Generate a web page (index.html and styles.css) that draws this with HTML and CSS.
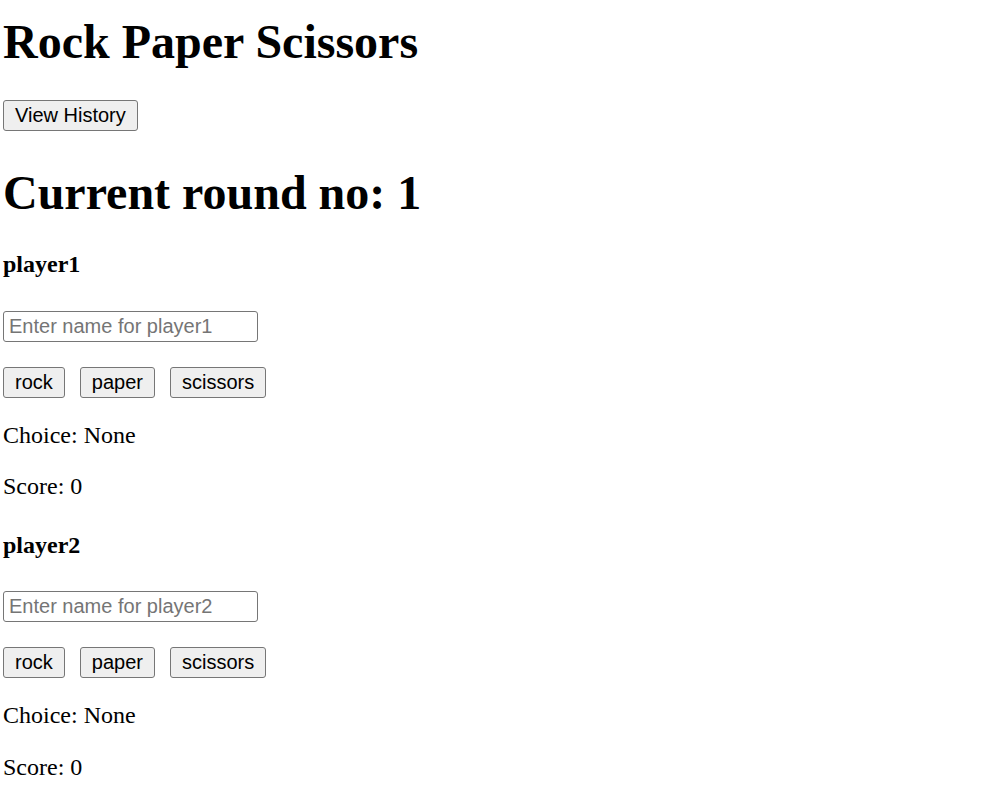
FILE: index.html
```html
<!DOCTYPE html>
<html>
<head>
<meta charset="utf-8">
<title>Rock Paper Scissors</title>
<link rel="stylesheet" href="styles.css">
</head>
<body>
<h1 class="title">Rock Paper Scissors</h1>
<div class="history"><button class="btn">View History</button></div>
<h1 class="round">Current round no: 1</h1>

<section class="player">
  <h4 class="player-name">player1</h4>
  <div class="field"><input class="name-input" type="text" placeholder="Enter name for player1"></div>
  <div class="choices">
    <button class="btn">rock</button>
    <button class="btn">paper</button>
    <button class="btn">scissors</button>
  </div>
  <p class="stat">Choice: None</p>
  <p class="stat">Score: 0</p>
</section>

<section class="player">
  <h4 class="player-name">player2</h4>
  <div class="field"><input class="name-input" type="text" placeholder="Enter name for player2"></div>
  <div class="choices">
    <button class="btn">rock</button>
    <button class="btn">paper</button>
    <button class="btn">scissors</button>
  </div>
  <p class="stat">Choice: None</p>
  <p class="stat">Score: 0</p>
</section>
</body>
</html>
```
FILE: styles.css
```css
html, body {
  background: #ffffff;
}
body {
  margin: 0;
  padding: 0 3px;
  font-family: "Liberation Serif", "Times New Roman", serif;
  font-size: 24px;
  line-height: 27.6px;
  color: #000;
}
.title {
  font-size: 48px;
  line-height: 56px;
  font-weight: bold;
  margin: 14px 0 0;
}
.history {
  display: flex;
  margin: 30px 0 0;
}
.round {
  font-size: 48px;
  line-height: 56px;
  font-weight: bold;
  margin: 34px 0 0;
}
.btn {
  font-family: "Liberation Sans", Arial, sans-serif;
  font-size: 20px;
  line-height: 23px;
  color: #000;
  background: #efefef;
  border: 1px solid #767676;
  border-radius: 3px;
  padding: 3px 11px;
  margin: 0;
}
.player-name {
  font-size: 24px;
  font-weight: bold;
  margin: 31px 0 0;
}
.player:first-of-type .player-name {
  margin-top: 30px;
}
.field {
  display: flex;
  margin: 32px 0 0;
}
.name-input {
  font-family: "Liberation Sans", Arial, sans-serif;
  font-size: 20px;
  line-height: 23px;
  width: 255px;
  box-sizing: border-box;
  height: 31px;
  padding: 3px 5px;
  border: 1px solid #767676;
  border-radius: 3px;
  margin: 0;
  color: #000;
}
.name-input::placeholder {
  color: #757575;
}
.choices {
  display: flex;
  gap: 15px;
  margin: 25px 0 0;
}
.stat {
  margin: 24px 0 0;
}
```
